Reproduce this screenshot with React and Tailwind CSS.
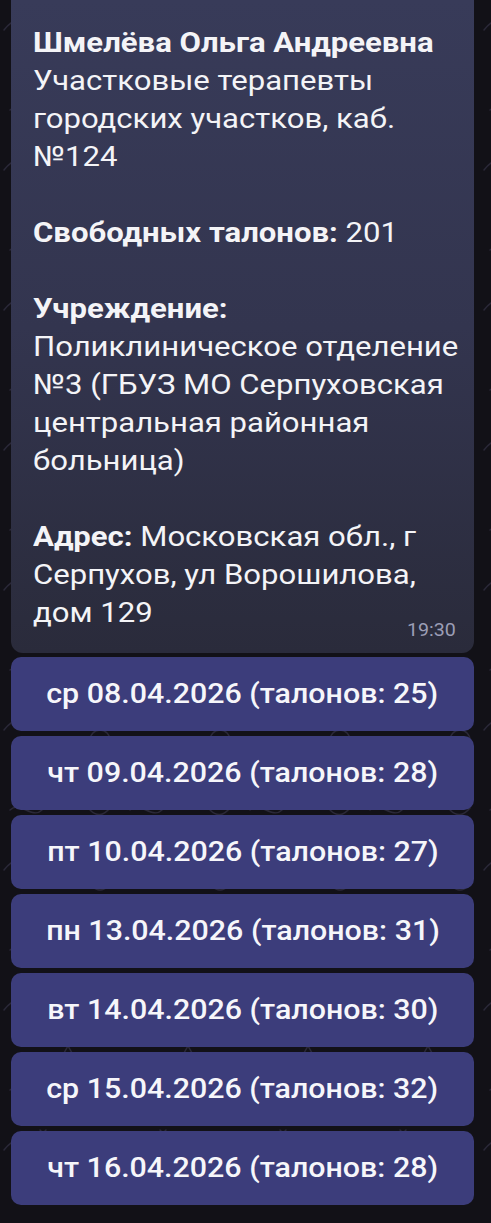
import React from "react";

const buttons = [
  "ср 08.04.2026 (талонов: 25)",
  "чт 09.04.2026 (талонов: 28)",
  "пт 10.04.2026 (талонов: 27)",
  "пн 13.04.2026 (талонов: 31)",
  "вт 14.04.2026 (талонов: 30)",
  "ср 15.04.2026 (талонов: 32)",
  "чт 16.04.2026 (талонов: 28)",
];

function Doodles() {
  return (
    <svg className="absolute inset-0 h-full w-full" xmlns="http://www.w3.org/2000/svg">
      <defs>
        <pattern id="dd" width="120" height="140" patternUnits="userSpaceOnUse">
          <g fill="none" stroke="#2a2838" strokeWidth="1.4" strokeLinecap="round">
            <path d="M4 30 q14 -18 26 -4" />
            <circle cx="100" cy="40" r="10" />
            <path d="M60 80 l8 -14 l8 14 z" />
            <path d="M10 110 c10 -10 22 10 32 0" />
            <path d="M90 110 q10 10 20 -2" />
            <path d="M40 10 l6 6 m0 -6 l-6 6" />
          </g>
        </pattern>
      </defs>
      <rect width="100%" height="100%" fill="url(#dd)" />
    </svg>
  );
}

export default function App() {
  return (
    <div
      className="relative min-h-[1223px] w-[491px] overflow-hidden bg-[#121117]"
      style={{ fontFamily: "Roboto, 'Noto Sans', sans-serif" }}
    >
      <Doodles />
      <div className="relative pl-[11px] pr-[17px]">
        <div className="relative rounded-b-[12px] bg-gradient-to-b from-[#383b59] via-[#33354f] to-[#2a2b3b] pl-[22px] pr-[16px] pt-[24px] pb-[21px] text-[28px] leading-[38px] text-[#f4f4f7]">
          <div className="origin-left scale-x-[1.11] whitespace-nowrap">
            <span className="font-bold">Шмелёва Ольга Андреевна</span>
            <br />
            Участковые терапевты
            <br />
            городских участков, каб.
            <br />
            №124
            <br />
            <br />
            <span className="font-bold">Свободных талонов:</span> 201
            <br />
            <br />
            <span className="font-bold">Учреждение:</span>
            <br />
            Поликлиническое отделение
            <br />
            №3 (ГБУЗ МО Серпуховская
            <br />
            центральная районная
            <br />
            больница)
            <br />
            <br />
            <span className="font-bold">Адрес:</span> Московская обл., г
            <br />
            Серпухов, ул Ворошилова,
            <br />
            дом 129
          </div>
          <span className="absolute bottom-[14px] right-[18px] origin-right scale-x-[1.09] text-[18px] leading-[18px] text-[#9c9eb6]">
            19:30
          </span>
        </div>
        <div className="mt-[4px] flex flex-col gap-[5px]">
          {buttons.map((b) => (
            <div
              key={b}
              className="flex h-[74px] items-center justify-center rounded-[10px] bg-[#3c3d7b] text-[27px] font-medium text-[#f6f6fa]"
            >
              <span className="scale-x-[1.125] whitespace-nowrap">{b}</span>
            </div>
          ))}
        </div>
      </div>
    </div>
  );
}
